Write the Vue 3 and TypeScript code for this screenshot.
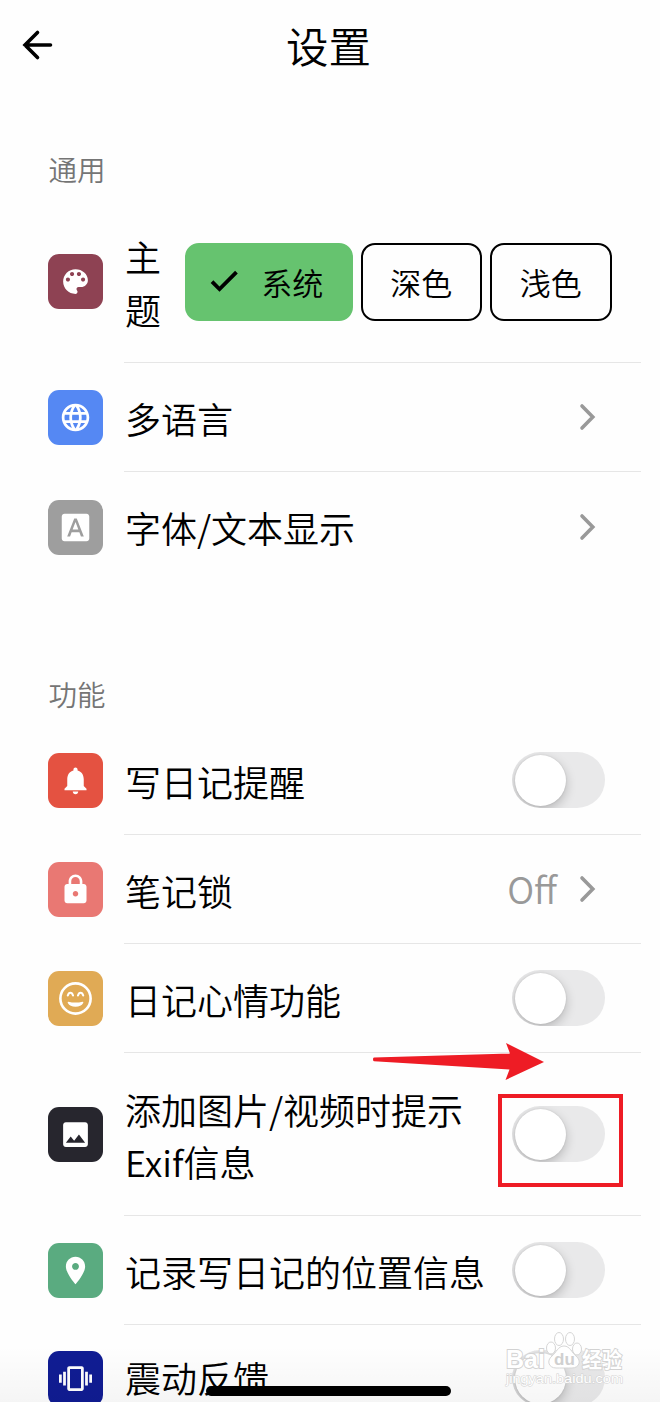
<script setup lang="ts">
import { ref } from 'vue'

interface Row {
  label: string
  color: string
  icon: string
  kind: 'theme' | 'link' | 'toggle'
  value?: string
  tall?: boolean
}

const icons: Record<string, string> = {
  palette:
    'M12 3c-4.97 0-9 4.03-9 9s4.03 9 9 9c.83 0 1.5-.67 1.5-1.5 0-.39-.15-.74-.39-1.01-.23-.26-.38-.61-.38-.99 0-.83.67-1.5 1.5-1.5H16c2.76 0 5-2.24 5-5 0-4.42-4.03-8-9-8zm-5.5 9c-.83 0-1.5-.67-1.5-1.5S5.67 9 6.5 9 8 9.67 8 10.5 7.33 12 6.5 12zm3-4C8.67 8 8 7.33 8 6.5S8.67 5 9.5 5s1.5.67 1.5 1.5S10.33 8 9.5 8zm5 0c-.83 0-1.5-.67-1.5-1.5S13.67 5 14.5 5s1.5.67 1.5 1.5S15.33 8 14.5 8zm3 4c-.83 0-1.5-.67-1.5-1.5S16.67 9 17.5 9s1.5.67 1.5 1.5-.67 1.5-1.5 1.5z',
  globe:
    'M11.99 2C6.47 2 2 6.48 2 12s4.47 10 9.99 10C17.52 22 22 17.52 22 12S17.52 2 11.99 2zm6.93 6h-2.95c-.32-1.25-.78-2.45-1.38-3.56 1.84.63 3.37 1.91 4.33 3.56zM12 4.04c.83 1.2 1.48 2.53 1.91 3.96h-3.82c.43-1.43 1.08-2.76 1.91-3.96zM4.26 14C4.1 13.36 4 12.69 4 12s.1-1.36.26-2h3.38c-.08.66-.14 1.32-.14 2s.06 1.34.14 2H4.26zm.82 2h2.95c.32 1.25.78 2.45 1.38 3.56-1.84-.63-3.37-1.9-4.33-3.56zm2.95-8H5.08c.96-1.66 2.49-2.93 4.33-3.56C8.81 5.55 8.35 6.75 8.03 8zM12 19.96c-.83-1.2-1.48-2.53-1.91-3.96h3.82c-.43 1.43-1.08 2.76-1.91 3.96zM14.34 14H9.66c-.09-.66-.16-1.32-.16-2s.07-1.35.16-2h4.68c.09.65.16 1.32.16 2s-.07 1.34-.16 2zm.25 5.56c.6-1.11 1.06-2.31 1.38-3.56h2.95c-.96 1.65-2.49 2.93-4.33 3.56zM16.36 14c.08-.66.14-1.32.14-2s-.06-1.34-.14-2h3.38c.16.64.26 1.31.26 2s-.1 1.36-.26 2h-3.38z',
  font: 'M9.93 13.5h4.14L12 7.98zM20 2H4c-1.1 0-2 .9-2 2v16c0 1.1.9 2 2 2h16c1.1 0 2-.9 2-2V4c0-1.1-.9-2-2-2zm-4.05 16.5l-1.14-3H9.17l-1.12 3H5.96l5.11-13h1.86l5.11 13h-2.09z',
  bell: 'M12 22c1.1 0 2-.9 2-2h-4c0 1.1.89 2 2 2zm6-6v-5c0-3.07-1.64-5.64-4.5-6.32V4c0-.83-.67-1.5-1.5-1.5s-1.5.67-1.5 1.5v.68C7.63 5.36 6 7.92 6 11v5l-2 2v1h16v-1l-2-2z',
  lock: 'M18 8h-1V6c0-2.76-2.24-5-5-5S7 3.24 7 6v2H6c-1.1 0-2 .9-2 2v10c0 1.1.9 2 2 2h12c1.1 0 2-.9 2-2V10c0-1.1-.9-2-2-2zm-6 9c-1.1 0-2-.9-2-2s.9-2 2-2 2 .9 2 2-.9 2-2 2zM15.1 8H8.9V6c0-1.71 1.39-3.1 3.1-3.1s3.1 1.39 3.1 3.1v2z',
  image:
    'M21 19V5c0-1.1-.9-2-2-2H5c-1.1 0-2 .9-2 2v14c0 1.1.9 2 2 2h14c1.1 0 2-.9 2-2zM8.5 13.5l2.5 3.01L14.5 12l4.5 6H5l3.5-4.5z',
  place:
    'M12 2C8.13 2 5 5.13 5 9c0 5.25 7 13 7 13s7-7.75 7-13c0-3.87-3.13-7-7-7zm0 9.5c-1.38 0-2.5-1.12-2.5-2.5s1.12-2.5 2.5-2.5 2.5 1.12 2.5 2.5-1.12 2.5-2.5 2.5z',
  vibrate:
    'M0 15h2V9H0v6zm3 2h2V7H3v10zm19-8v6h2V9h-2zm-3 8h2V7h-2v10zM16.5 3h-9C6.67 3 6 3.67 6 4.5v15c0 .83.67 1.5 1.5 1.5h9c.83 0 1.5-.67 1.5-1.5v-15c0-.83-.67-1.5-1.5-1.5zM16 19H8V5h8v14z',
}

const general: Row[] = [
  { label: '主题', color: '#8e4253', icon: 'palette', kind: 'theme', tall: true },
  { label: '多语言', color: '#5588f3', icon: 'globe', kind: 'link' },
  { label: '字体/文本显示', color: '#9e9e9e', icon: 'font', kind: 'link' },
]

const features: Row[] = [
  { label: '写日记提醒', color: '#e45241', icon: 'bell', kind: 'toggle' },
  { label: '笔记锁', color: '#e97873', icon: 'lock', kind: 'link', value: 'Off' },
  { label: '日记心情功能', color: '#e0aa55', icon: 'smile', kind: 'toggle' },
  { label: '添加图片/视频时提示Exif信息', color: '#27262e', icon: 'image', kind: 'toggle', tall: true },
  { label: '记录写日记的位置信息', color: '#5aab80', icon: 'place', kind: 'toggle' },
  { label: '震动反馈', color: '#101c93', icon: 'vibrate', kind: 'toggle' },
]

const groups = [
  { title: '通用', rows: general },
  { title: '功能', rows: features },
]

const themes = ['系统', '深色', '浅色']
const theme = ref('系统')
</script>

<template>
  <div class="screen">
    <header class="bar">
      <svg class="back" viewBox="0 0 32 32">
        <path d="M29.5 16H4M16.5 3.5L4 16l12.5 12.5" />
      </svg>
      <h1>设置</h1>
    </header>

    <section v-for="g in groups" :key="g.title" class="group">
      <h2>{{ g.title }}</h2>
      <div v-for="r in g.rows" :key="r.label" class="row" :class="[r.kind, { tall: r.tall }]">
        <span class="badge" :style="{ background: r.color }">
          <svg v-if="r.icon === 'smile'" viewBox="0 0 24 24">
            <circle class="ring" cx="12" cy="12" r="11" />
            <path class="eye" d="M6.4 9.8Q7 7.8 8.300 7.800T10.200 9.800M13.800 9.800Q14.400 7.800 15.700 7.800T17.600 9.800" />
            <path d="M6.9 14.300Q12 15.600 17.100 14.300Q18 14.300 17.600 15.300Q16 18 12 18Q8 18 6.400 15.300Q6 14.300 6.900 14.300Z" />
          </svg>
          <svg v-else viewBox="0 0 24 24"><path fill-rule="evenodd" :d="icons[r.icon]" /></svg>
        </span>
        <div class="body">
          <span class="label">{{ r.label }}</span>
          <div v-if="r.kind === 'theme'" class="chips">
            <button v-for="t in themes" :key="t" class="chip" :class="{ on: t === theme }" @click="theme = t">
              <svg v-if="t === theme" viewBox="0 0 24 24"><path d="M9 15.6L4.9 11.500l-1.800 1.800L9 19.200 21.200 7l-1.800-1.800z" /></svg>
              <span>{{ t }}</span>
            </button>
          </div>
          <div v-else-if="r.kind === 'link'" class="more">
            <span v-if="r.value" class="value">{{ r.value }}</span>
            <svg class="chevron" viewBox="0 0 18 28"><path d="M3 3l10.8 11L3 25" /></svg>
          </div>
          <div v-else class="switch"><i></i></div>
        </div>
      </div>
    </section>

    <div class="fade"></div>
    <div class="frame"></div>
    <svg class="arrow" viewBox="0 0 172 38">
      <path d="M0 16.2Q0 14.7 1 14.6L137 10.5L133 0L171 19L132.5 37L136.5 26.5L1 18.2Q0 18 0 16.2Z" />
    </svg>

    <div class="mark">
      <svg viewBox="0 0 120 62">
        <g class="paw">
          <ellipse cx="46" cy="20" rx="4.5" ry="6" />
          <ellipse cx="54" cy="11" rx="4.5" ry="6.5" />
          <ellipse cx="65" cy="11" rx="4.5" ry="6.5" />
          <ellipse cx="72" cy="21" rx="4.5" ry="6" />
          <path d="M59 18c-6 0-8 7-12 10-6 5-3 12 4 12 4 0 12 0 16 0 7 0 10-7 4-12-4-3-6-10-12-10z" />
        </g>
        <text class="big" x="1" y="40" textLength="39" lengthAdjust="spacingAndGlyphs">Bai</text>
        <text class="du" x="49" y="37">du</text>
        <text class="cn" x="77" y="39" textLength="40" lengthAdjust="spacingAndGlyphs">经验</text>
        <text class="url" x="1" y="55" textLength="117" lengthAdjust="spacingAndGlyphs">jingyan.baidu.com</text>
      </svg>
    </div>
    <div class="home"></div>
  </div>
</template>

<style>
html,
body {
  margin: 0;
  background: #fefefe;
}
</style>

<style scoped>
.screen {
  position: relative;
  width: 660px;
  height: 1402px;
  overflow: hidden;
  background: #fefefe;
  color: #000;
  font-family: 'Noto Sans CJK SC', sans-serif;
  font-weight: 350;
}
.bar {
  display: grid;
  grid-template-columns: 54px 1fr 54px;
  align-items: center;
  height: 94px;
}
.back {
  width: 32px;
  height: 32px;
  margin: -4px 0 0 21px;
  fill: none;
  stroke: #000;
  stroke-width: 3.6;
  stroke-linecap: round;
  stroke-linejoin: miter;
}
h1 {
  margin: -4px 3px 0 0;
  font-size: 42.5px;
  line-height: 60px;
  font-weight: 350;
  text-align: center;
}
h2 {
  margin: 0 0 6px;
  padding-left: 48.5px;
  height: 50px;
  line-height: 50px;
  font-size: 28.5px;
  font-weight: 350;
  color: #757575;
}
.group {
  padding-top: 50px;
}
.group + .group {
  padding-top: 87px;
}
.row {
  display: flex;
  align-items: center;
  height: 109px;
  padding: 0 19px 0 48px;
}
.row.tall {
  height: 163px;
}
.row:last-child {
  height: 110px;
}
.group + .group h2 {
  margin-bottom: 7px;
}
.group + .group .row:last-child {
  height: 107px;
}
.group + .group .row:last-child .label {
  top: -1px;
}
.badge {
  flex: none;
  display: flex;
  align-items: center;
  justify-content: center;
  width: 55px;
  height: 55px;
  margin-right: 21px;
  border-radius: 11px;
}
.badge svg {
  width: 33px;
  height: 33px;
  fill: #fff;
}
.badge .ring {
  fill: none;
  stroke: #fff;
  stroke-width: 1.9;
}
.badge .eye {
  fill: none;
  stroke: #fff;
  stroke-width: 1.5;
  stroke-linecap: round;
}
.body {
  flex: 1;
  display: flex;
  align-items: center;
  justify-content: space-between;
  box-sizing: border-box;
  height: 100%;
  padding-right: 36px;
  border-bottom: 1px solid #e6e6e6;
}
.row:last-child .body {
  border-bottom-color: transparent;
}
.label {
  position: relative;
  top: 1px;
  padding-left: 1px;
  max-width: 364px;
  font-size: 36px;
  line-height: 52.5px;
}
.theme .label {
  width: 36px;
  top: 1px;
}
.theme .body {
  padding: 1px 29.5px 0 0;
}
.chips {
  display: flex;
  gap: 8px;
}
.chip {
  display: flex;
  align-items: center;
  justify-content: center;
  box-sizing: border-box;
  width: 121.5px;
  height: 78px;
  padding: 0;
  border: 2px solid #000;
  border-radius: 14px;
  background: transparent;
  color: #000;
  font: inherit;
  font-size: 31px;
  line-height: 45px;
}
.chip.on {
  width: 167.5px;
  border-color: #66c36f;
  background: #66c36f;
}
.chip svg {
  width: 36px;
  height: 36px;
  margin: -1px 19px 0 -8px;
}
.more {
  display: flex;
  align-items: center;
}
.value {
  margin-right: 22px;
  font-size: 36.5px;
  line-height: 52px;
  color: #999;
}
.chevron {
  width: 18px;
  height: 28px;
  margin-right: 8px;
  fill: none;
  stroke: #999;
  stroke-width: 3.6;
  stroke-linecap: round;
  stroke-linejoin: miter;
}
.switch {
  box-sizing: border-box;
  width: 93px;
  height: 56px;
  padding: 2.5px;
  border-radius: 28px;
  background: #e9e9ea;
  overflow: hidden;
}
.switch i {
  display: block;
  width: 51px;
  height: 51px;
  border-radius: 50%;
  background: #fff;
  box-shadow: 0 4px 11px rgba(0, 0, 0, 0.22), 0 0 2px rgba(0, 0, 0, 0.12);
}
.fade {
  position: absolute;
  left: 0;
  right: 0;
  bottom: 0;
  height: 56px;
  background: linear-gradient(rgba(0, 0, 0, 0), rgba(0, 0, 0, 0.035));
}
.frame {
  position: absolute;
  left: 498px;
  top: 1094px;
  width: 117px;
  height: 85px;
  border: 4px solid #ee1c25;
}
.arrow {
  position: absolute;
  left: 373px;
  top: 1043px;
  width: 172px;
  height: 38px;
  fill: #ee1c25;
}
.home {
  position: absolute;
  left: 205.5px;
  top: 1386px;
  width: 245.5px;
  height: 9.5px;
  border-radius: 5px;
  background: #000;
}
.mark {
  position: absolute;
  left: 505px;
  top: 1328px;
  width: 120px;
  height: 62px;
}
.mark svg {
  display: block;
  width: 120px;
  height: 62px;
  overflow: visible;
}
.mark text {
  font-family: 'Liberation Sans', 'Noto Sans CJK SC', sans-serif;
  font-weight: 700;
  fill: #fff;
  stroke: #d2d2d2;
  stroke-width: 1.8;
  paint-order: stroke;
}
.mark .paw {
  fill: #fff;
  stroke: #d6d6d6;
  stroke-width: 1;
}
.mark .big {
  font-size: 26px;
}
.mark .du {
  font-size: 17px;
  fill: #d0d0d0;
  stroke: none;
}
.mark .cn {
  font-size: 21px;
}
.mark .url {
  font-size: 13px;
  font-weight: 400;
  stroke-width: 1;
}
</style>
